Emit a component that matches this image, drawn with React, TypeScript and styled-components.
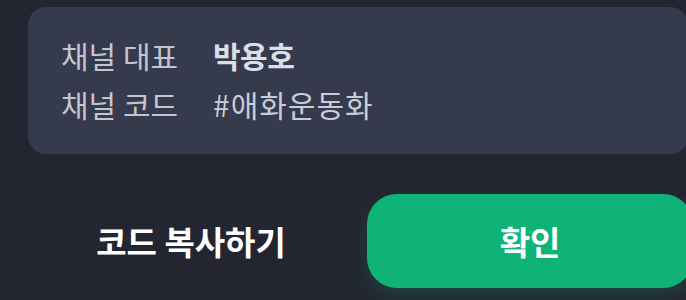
import React from 'react';
import styled, { createGlobalStyle } from 'styled-components';

const GlobalStyle = createGlobalStyle`
  html, body {
    margin: 0;
    padding: 0;
    background: #232631;
    overflow: hidden;
  }
  body {
    font-family: "Noto Sans CJK KR", "Noto Sans", sans-serif;
  }
`;

const Page = styled.div`
  width: 686px;
  height: 300px;
  padding: 7px 0 0 28px;
  box-sizing: border-box;
  overflow: hidden;
`;

const Content = styled.div`
  width: 665px;
  display: flex;
  flex-direction: column;
  gap: 40px;
`;

const InfoCard = styled.div`
  width: 660px;
  height: 147px;
  box-sizing: border-box;
  padding: 24px 33px 26px;
  border-radius: 18px;
  background: #353a4d;
  display: flex;
  flex-direction: column;
  justify-content: center;
`;

const InfoRow = styled.div`
  display: flex;
  align-items: center;
  height: 50px;
  font-size: 30px;
  letter-spacing: 0;
`;

const InfoLabel = styled.span`
  width: 152px;
  color: #c3c6d0;
  font-weight: 400;
`;

const InfoValue = styled.span<{ $bold?: boolean }>`
  color: ${({ $bold }) => ($bold ? '#dcdee5' : '#c9ccd5')};
  font-weight: ${({ $bold }) => ($bold ? 700 : 400)};
  letter-spacing: ${({ $bold }) => ($bold ? '-0.5px' : '1px')};
`;

const ButtonRow = styled.div`
  display: flex;
  gap: 13px;
`;

const Button = styled.button<{ $primary?: boolean }>`
  flex: 0 0 326px;
  height: 94px;
  padding: 0;
  border: none;
  border-radius: 30px;
  background: ${({ $primary }) => ($primary ? '#0fb377' : 'transparent')};
  box-shadow: ${({ $primary }) =>
    $primary ? '0 8px 18px rgba(15, 179, 119, 0.18)' : 'none'};
  color: #ffffff;
  font-family: "Noto Sans CJK KR", "Noto Sans", sans-serif;
  font-size: 33px;
  font-weight: 700;
  letter-spacing: 0;
  cursor: pointer;
`;

export default function App() {
  return (
    <>
      <GlobalStyle />
      <Page>
        <Content>
          <InfoCard>
            <InfoRow>
              <InfoLabel>채널 대표</InfoLabel>
              <InfoValue $bold>박용호</InfoValue>
            </InfoRow>
            <InfoRow>
              <InfoLabel>채널 코드</InfoLabel>
              <InfoValue>#애화운동화</InfoValue>
            </InfoRow>
          </InfoCard>
          <ButtonRow>
            <Button>코드 복사하기</Button>
            <Button $primary>확인</Button>
          </ButtonRow>
        </Content>
      </Page>
    </>
  );
}
